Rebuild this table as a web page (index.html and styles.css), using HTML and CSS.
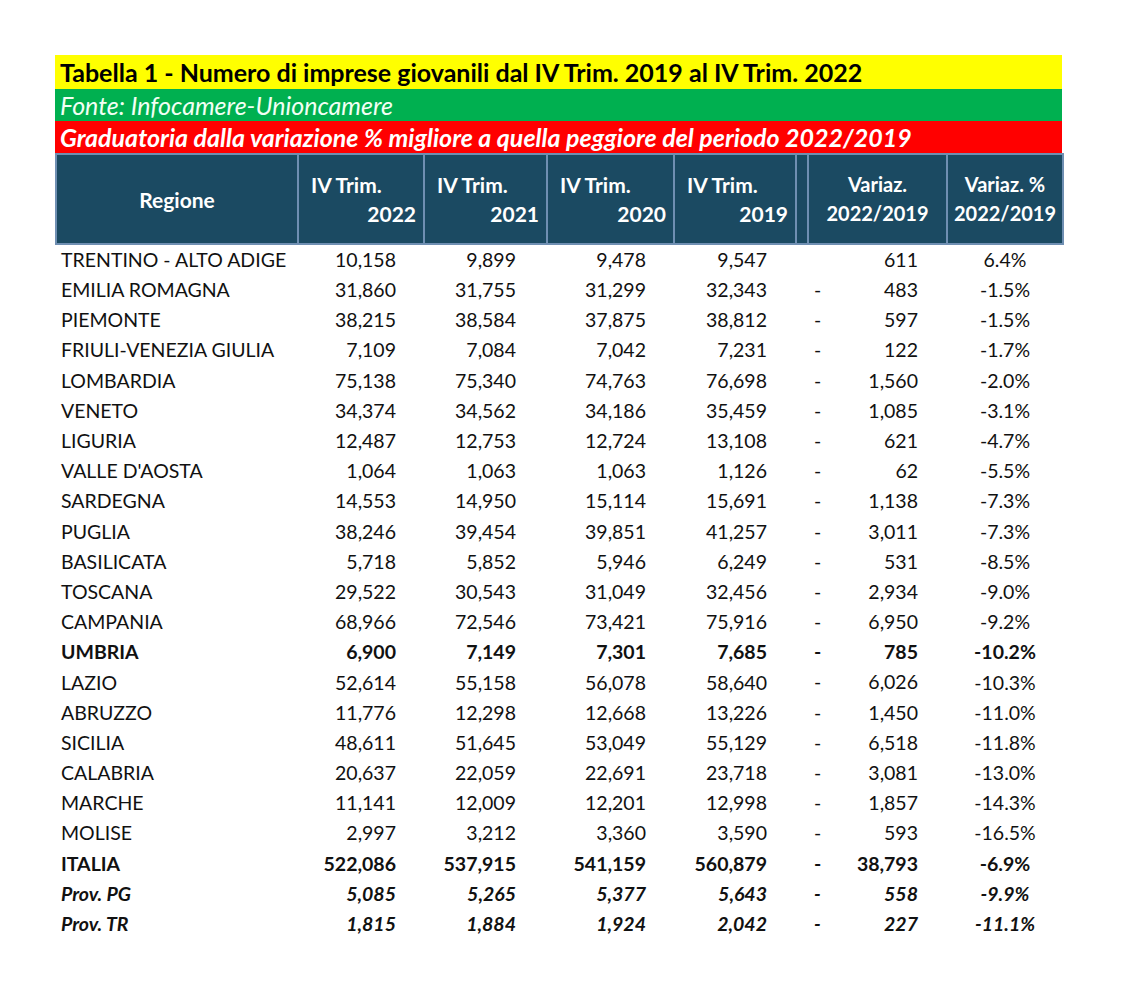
FILE: index.html
```html
<!DOCTYPE html>
<html lang="it">
<head>
<meta charset="utf-8">
<title>Tabella 1</title>
<link rel="stylesheet" href="styles.css">
</head>
<body>
<div class="sheet">
  <div class="bar bar-title">Tabella 1 - Numero di imprese giovanili dal IV Trim. 2019 al IV Trim. 2022</div>
  <div class="bar bar-source">Fonte: Infocamere-Unioncamere</div>
  <div class="bar bar-rank">Graduatoria dalla variazione % migliore a quella peggiore del periodo 2022/2019</div>
  <table class="data">
    <colgroup>
      <col class="c-reg"><col class="c-22"><col class="c-21"><col class="c-20"><col class="c-19"><col class="c-gap"><col class="c-var"><col class="c-pct">
    </colgroup>
    <thead>
      <tr>
        <th class="h-center">Regione</th>
        <th><div class="h-top">IV Trim.</div><div class="h-bot">2022</div></th>
        <th><div class="h-top">IV Trim.</div><div class="h-bot">2021</div></th>
        <th><div class="h-top">IV Trim.</div><div class="h-bot">2020</div></th>
        <th><div class="h-top">IV Trim.</div><div class="h-bot">2019</div></th>
        <th></th>
        <th class="h-center h-var"><div>Variaz.</div><div>2022/2019</div></th>
        <th class="h-center h-var"><div>Variaz. %</div><div>2022/2019</div></th>
      </tr>
    </thead>
    <tbody>
      <tr><td class="reg">TRENTINO - ALTO ADIGE</td><td class="n n22">10,158</td><td class="n n21">9,899</td><td class="n n20">9,478</td><td class="n n19">9,547</td><td></td><td class="var"><span></span><span>611</span></td><td class="pct">6.4%</td></tr>
      <tr><td class="reg">EMILIA ROMAGNA</td><td class="n n22">31,860</td><td class="n n21">31,755</td><td class="n n20">31,299</td><td class="n n19">32,343</td><td></td><td class="var"><span>-</span><span>483</span></td><td class="pct">-1.5%</td></tr>
      <tr><td class="reg">PIEMONTE</td><td class="n n22">38,215</td><td class="n n21">38,584</td><td class="n n20">37,875</td><td class="n n19">38,812</td><td></td><td class="var"><span>-</span><span>597</span></td><td class="pct">-1.5%</td></tr>
      <tr><td class="reg">FRIULI-VENEZIA GIULIA</td><td class="n n22">7,109</td><td class="n n21">7,084</td><td class="n n20">7,042</td><td class="n n19">7,231</td><td></td><td class="var"><span>-</span><span>122</span></td><td class="pct">-1.7%</td></tr>
      <tr><td class="reg">LOMBARDIA</td><td class="n n22">75,138</td><td class="n n21">75,340</td><td class="n n20">74,763</td><td class="n n19">76,698</td><td></td><td class="var"><span>-</span><span>1,560</span></td><td class="pct">-2.0%</td></tr>
      <tr><td class="reg">VENETO</td><td class="n n22">34,374</td><td class="n n21">34,562</td><td class="n n20">34,186</td><td class="n n19">35,459</td><td></td><td class="var"><span>-</span><span>1,085</span></td><td class="pct">-3.1%</td></tr>
      <tr><td class="reg">LIGURIA</td><td class="n n22">12,487</td><td class="n n21">12,753</td><td class="n n20">12,724</td><td class="n n19">13,108</td><td></td><td class="var"><span>-</span><span>621</span></td><td class="pct">-4.7%</td></tr>
      <tr><td class="reg">VALLE D'AOSTA</td><td class="n n22">1,064</td><td class="n n21">1,063</td><td class="n n20">1,063</td><td class="n n19">1,126</td><td></td><td class="var"><span>-</span><span>62</span></td><td class="pct">-5.5%</td></tr>
      <tr><td class="reg">SARDEGNA</td><td class="n n22">14,553</td><td class="n n21">14,950</td><td class="n n20">15,114</td><td class="n n19">15,691</td><td></td><td class="var"><span>-</span><span>1,138</span></td><td class="pct">-7.3%</td></tr>
      <tr><td class="reg">PUGLIA</td><td class="n n22">38,246</td><td class="n n21">39,454</td><td class="n n20">39,851</td><td class="n n19">41,257</td><td></td><td class="var"><span>-</span><span>3,011</span></td><td class="pct">-7.3%</td></tr>
      <tr><td class="reg">BASILICATA</td><td class="n n22">5,718</td><td class="n n21">5,852</td><td class="n n20">5,946</td><td class="n n19">6,249</td><td></td><td class="var"><span>-</span><span>531</span></td><td class="pct">-8.5%</td></tr>
      <tr><td class="reg">TOSCANA</td><td class="n n22">29,522</td><td class="n n21">30,543</td><td class="n n20">31,049</td><td class="n n19">32,456</td><td></td><td class="var"><span>-</span><span>2,934</span></td><td class="pct">-9.0%</td></tr>
      <tr><td class="reg">CAMPANIA</td><td class="n n22">68,966</td><td class="n n21">72,546</td><td class="n n20">73,421</td><td class="n n19">75,916</td><td></td><td class="var"><span>-</span><span>6,950</span></td><td class="pct">-9.2%</td></tr>
      <tr class="bold"><td class="reg">UMBRIA</td><td class="n n22">6,900</td><td class="n n21">7,149</td><td class="n n20">7,301</td><td class="n n19">7,685</td><td></td><td class="var"><span>-</span><span>785</span></td><td class="pct">-10.2%</td></tr>
      <tr><td class="reg">LAZIO</td><td class="n n22">52,614</td><td class="n n21">55,158</td><td class="n n20">56,078</td><td class="n n19">58,640</td><td></td><td class="var"><span>-</span><span>6,026</span></td><td class="pct">-10.3%</td></tr>
      <tr><td class="reg">ABRUZZO</td><td class="n n22">11,776</td><td class="n n21">12,298</td><td class="n n20">12,668</td><td class="n n19">13,226</td><td></td><td class="var"><span>-</span><span>1,450</span></td><td class="pct">-11.0%</td></tr>
      <tr><td class="reg">SICILIA</td><td class="n n22">48,611</td><td class="n n21">51,645</td><td class="n n20">53,049</td><td class="n n19">55,129</td><td></td><td class="var"><span>-</span><span>6,518</span></td><td class="pct">-11.8%</td></tr>
      <tr><td class="reg">CALABRIA</td><td class="n n22">20,637</td><td class="n n21">22,059</td><td class="n n20">22,691</td><td class="n n19">23,718</td><td></td><td class="var"><span>-</span><span>3,081</span></td><td class="pct">-13.0%</td></tr>
      <tr><td class="reg">MARCHE</td><td class="n n22">11,141</td><td class="n n21">12,009</td><td class="n n20">12,201</td><td class="n n19">12,998</td><td></td><td class="var"><span>-</span><span>1,857</span></td><td class="pct">-14.3%</td></tr>
      <tr><td class="reg">MOLISE</td><td class="n n22">2,997</td><td class="n n21">3,212</td><td class="n n20">3,360</td><td class="n n19">3,590</td><td></td><td class="var"><span>-</span><span>593</span></td><td class="pct">-16.5%</td></tr>
      <tr class="bold"><td class="reg">ITALIA</td><td class="n n22">522,086</td><td class="n n21">537,915</td><td class="n n20">541,159</td><td class="n n19">560,879</td><td></td><td class="var"><span>-</span><span>38,793</span></td><td class="pct">-6.9%</td></tr>
      <tr class="bold italic"><td class="reg">Prov. PG</td><td class="n n22">5,085</td><td class="n n21">5,265</td><td class="n n20">5,377</td><td class="n n19">5,643</td><td></td><td class="var"><span>-</span><span>558</span></td><td class="pct">-9.9%</td></tr>
      <tr class="bold italic"><td class="reg">Prov. TR</td><td class="n n22">1,815</td><td class="n n21">1,884</td><td class="n n20">1,924</td><td class="n n19">2,042</td><td></td><td class="var"><span>-</span><span>227</span></td><td class="pct">-11.1%</td></tr>
    </tbody>
  </table>
</div>
</body>
</html>
```
FILE: styles.css
```css
html, body {
  margin: 0;
  padding: 0;
  background: #ffffff;
}
body {
  font-family: Lato, "Open Sans", "Liberation Sans", sans-serif;
  color: #111111;
}
.sheet {
  width: 1007px;
  margin: 55px 0 0 55px;
}
.bar {
  box-sizing: border-box;
  padding-left: 5px;
  display: flex;
  align-items: center;
  font-size: 25px;
  white-space: nowrap;
}
.bar-title {
  height: 34px;
  background: #ffff00;
  font-weight: 700;
  color: #000000;
}
.bar-source {
  height: 32px;
  background: #00b050;
  color: #f2fff4;
  font-style: italic;
}
.bar-rank {
  height: 32px;
  background: #ff0000;
  color: #ffffff;
  font-style: italic;
  font-weight: 700;
}
.data {
  width: 1007px;
  table-layout: fixed;
  border-collapse: collapse;
  font-size: 19.5px;
}
.c-reg { width: 242px; }
.c-22 { width: 126px; }
.c-21 { width: 123px; }
.c-20 { width: 127px; }
.c-19 { width: 122px; }
.c-gap { width: 12px; }
.c-var { width: 139px; }
.c-pct { width: 116px; }
.data thead th {
  height: 88px;
  background: #1b4a62;
  color: #ffffff;
  border: 2px solid #6f8fb2;
  font-weight: 700;
  font-size: 21px;
  padding: 0 7px 0 12px;
  vertical-align: middle;
  line-height: 29px;
}
.data thead th.h-center {
  text-align: center;
  padding: 0 4px;
}
.data thead th.h-var {
  font-size: 20px;
}
.h-top { text-align: left; }
.h-bot { text-align: right; }
.data tbody tr { height: 30.2px; }
.data td {
  padding: 0;
  white-space: nowrap;
  vertical-align: middle;
  line-height: 24px;
}
.data td.reg { padding-left: 5px; }
.data td.n { text-align: right; }
.data td.n22 { padding-right: 28px; }
.data td.n21 { padding-right: 31px; }
.data td.n20 { padding-right: 28px; }
.data td.n19 { padding-right: 29px; }
.data td.var {
  display: flex;
  justify-content: space-between;
  padding: 3px 29px 3px 6px;
}
.data td.pct { text-align: center; }
tr.bold td { font-weight: 700; }
tr.italic td { font-style: italic; }
```
